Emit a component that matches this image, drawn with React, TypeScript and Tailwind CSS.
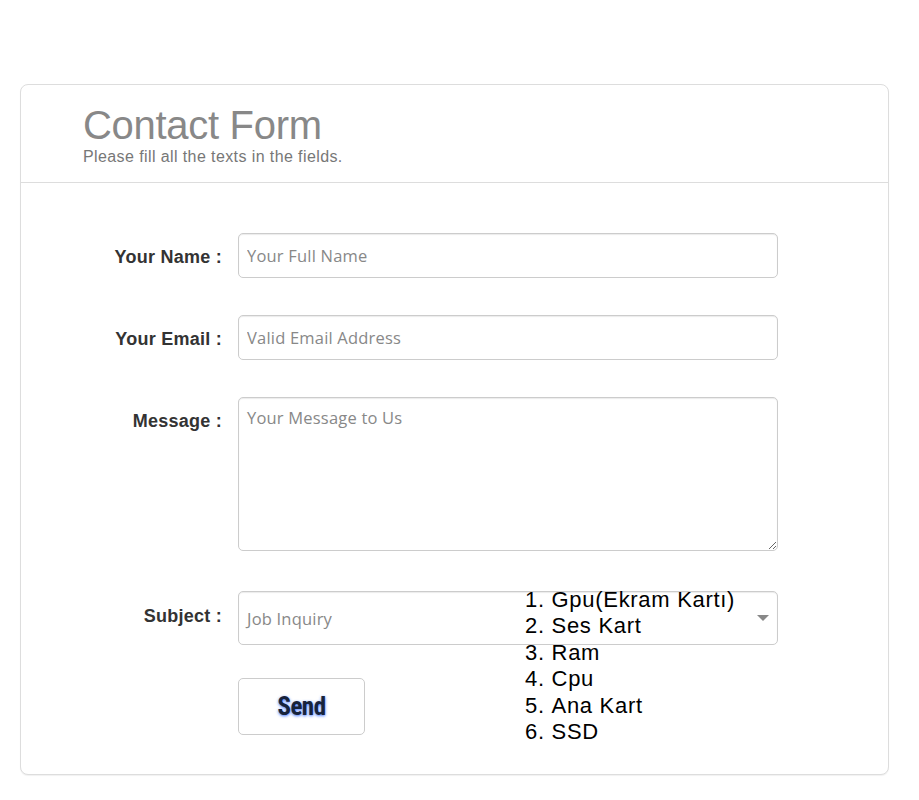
import React from "react";

export default function App() {
  const items = ["Gpu(Ekram Kartı)", "Ses Kart", "Ram", "Cpu", "Ana Kart", "SSD"];
  const labelCls =
    "w-[201px] shrink-0 text-right font-bold text-[18px] tracking-[0.25px] text-[#333] font-['Liberation_Sans',Arial,sans-serif]";
  const inputCls =
    "w-[540px] shrink-0 border border-[#ccc] rounded-[5px] shadow-[inset_0_1px_1px_rgba(0,0,0,0.08)] px-[8px] text-[16.5px] tracking-[0.2px] text-[#555] placeholder:text-[#888] font-['Open_Sans',sans-serif] outline-none bg-white";
  return (
    <div className="relative min-h-[800px] bg-white pt-[84px] px-[20px]">
      <div className="w-[869px] h-[691px] border border-[#ddd] rounded-[8px] shadow-[0_1px_1px_rgba(0,0,0,0.06)] bg-white">
        <div className="h-[98px] border-b border-[#ddd] pl-[62px] pt-[15px] font-['Liberation_Sans',Arial,sans-serif]">
          <h1 className="text-[40px] leading-[50px] text-[#888] tracking-[-0.3px]">Contact Form</h1>
          <p className="text-[16px] leading-[16px] tracking-[0.4px] text-[#777] -mt-[1px]">Please fill all the texts in the fields.</p>
        </div>
        <form className="pt-[50px] flex flex-col">
          <div className="flex items-center gap-[16px]">
            <label className={labelCls + " pt-[4px]"}>Your Name :</label>
            <input className={inputCls + " h-[45px]"} placeholder="Your Full Name" />
          </div>
          <div className="flex items-center gap-[16px] mt-[37px]">
            <label className={labelCls + " pt-[4px]"}>Your Email :</label>
            <input className={inputCls + " h-[45px]"} placeholder="Valid Email Address" />
          </div>
          <div className="flex items-start gap-[16px] mt-[37px]">
            <label className={labelCls + " pt-[11px]"}>Message :</label>
            <textarea className={inputCls + " h-[154px] py-[9px] leading-[22px]"} placeholder="Your Message to Us" />
          </div>
          <div className="flex items-center gap-[16px] mt-[40px]">
            <label className={labelCls + " pb-[4px]"}>Subject :</label>
            <div className={inputCls + " h-[54px] relative flex items-center"}>
              <span className="text-[#888] pt-[2px]">Job Inquiry</span>
              <span className="absolute right-[8px] top-[23px] w-0 h-0 border-l-[6px] border-r-[6px] border-t-[6px] border-l-transparent border-r-transparent border-t-[#888]" />
            </div>
          </div>
          <div className="flex gap-[16px] mt-[33px]">
            <div className="w-[201px] shrink-0" />
            <button
              type="button"
              className="w-[127px] h-[57px] border border-[#ccc] rounded-[5px] bg-white text-[25px] font-bold text-[#18233b] font-['Liberation_Sans_Narrow','Roboto_Condensed',Arial,sans-serif] [font-stretch:condensed] tracking-[-0.5px] [text-shadow:0_1px_3px_rgba(40,100,255,0.9)]"
            >
              Send
            </button>
          </div>
        </form>
      </div>
      <ol className="absolute left-[525px] top-[587px] list-decimal list-inside text-[22px] leading-[26.4px] tracking-[0.7px] text-black font-['Liberation_Sans',Arial,sans-serif]">
        {items.map((t) => (
          <li key={t}>{t}</li>
        ))}
      </ol>
    </div>
  );
}
